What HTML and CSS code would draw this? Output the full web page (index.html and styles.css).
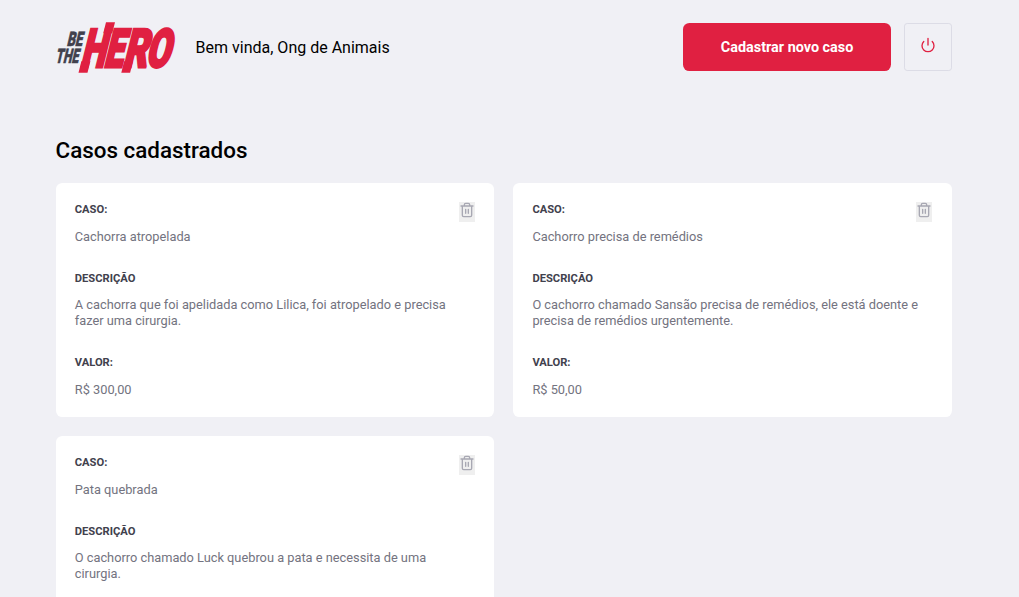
FILE: index.html
```html
<!DOCTYPE html>
<html lang="pt-BR">
<head>
<meta charset="utf-8">
<title>Be The Hero</title>
<link rel="stylesheet" href="styles.css">
</head>
<body>
<svg class="sprite" aria-hidden="true">
  <symbol id="trash" viewBox="0 0 24 24">
    <path d="M3 6h18M19 6v14a2 2 0 0 1-2 2H7a2 2 0 0 1-2-2V6m3 0V4a2 2 0 0 1 2-2h4a2 2 0 0 1 2 2v2M10 11v6M14 11v6"/>
  </symbol>
</svg>
<div class="profile">
  <header class="header">
    <svg class="logo" viewBox="0 0 121 51" role="img" aria-label="Be The Hero">
      <g class="logo-small">
        <text transform="translate(10.500 23.500) skewX(-13)" textLength="15.500" lengthAdjust="spacingAndGlyphs">BE</text>
        <text transform="translate(-1 41) skewX(-13)" textLength="23" lengthAdjust="spacingAndGlyphs">THE</text>
      </g>
      <g class="logo-big" transform="translate(0 44.700) skewX(-14)">
        <text x="23.700" textLength="24.500" lengthAdjust="spacingAndGlyphs">H</text>
        <text x="47.200" textLength="19" lengthAdjust="spacingAndGlyphs">E</text>
        <text x="66.500" textLength="24" lengthAdjust="spacingAndGlyphs">R</text>
        <text x="89" textLength="24" lengthAdjust="spacingAndGlyphs">O</text>
        <rect x="25.500" y="-4" width="6" height="8.500"/>
        <rect x="40.400" y="-43" width="6" height="8"/>
        <rect x="68.300" y="-4" width="5.800" height="8.500"/>
      </g>
    </svg>
    <span class="welcome">Bem vinda, Ong de Animais</span>
    <a class="button" href="#">Cadastrar novo caso</a>
    <button class="power" type="button" aria-label="Sair">
      <svg viewBox="0 0 24 24"><path d="M18.360 6.640a9 9 0 1 1-12.730 0M12 2v10"/></svg>
    </button>
  </header>
  <h1 class="title">Casos cadastrados</h1>
  <ul class="cases">
    <li class="case">
      <strong>CASO:</strong><p>Cachorra atropelada</p>
      <strong>DESCRIÇÃO</strong><p>A cachorra que foi apelidada como Lilica, foi atropelado e precisa fazer uma cirurgia.</p>
      <strong>VALOR:</strong><p>R$ 300,00</p>
      <button class="delete" type="button" aria-label="Excluir"><svg><use href="#trash"/></svg></button>
    </li>
    <li class="case">
      <strong>CASO:</strong><p>Cachorro precisa de remédios</p>
      <strong>DESCRIÇÃO</strong><p>O cachorro chamado Sansão precisa de remédios, ele está doente e precisa de remédios urgentemente.</p>
      <strong>VALOR:</strong><p>R$ 50,00</p>
      <button class="delete" type="button" aria-label="Excluir"><svg><use href="#trash"/></svg></button>
    </li>
    <li class="case">
      <strong>CASO:</strong><p>Pata quebrada</p>
      <strong>DESCRIÇÃO</strong><p>O cachorro chamado Luck quebrou a pata e necessita de uma cirurgia.</p>
      <button class="delete" type="button" aria-label="Excluir"><svg><use href="#trash"/></svg></button>
    </li>
  </ul>
</div>
</body>
</html>
```

FILE: styles.css
```css
* { margin: 0; padding: 0; box-sizing: border-box; }
html { height: 100%; overflow: hidden; }
body { height: 100%; overflow: hidden; background: #f0f0f5; font-family: Roboto, sans-serif; }
.sprite { position: absolute; width: 0; height: 0; }
.profile { width: 896px; margin: 22px 0 0 55.6px; }
.header { display: flex; align-items: center; height: 50px; }
.logo { width: 121px; height: 51px; overflow: visible; flex: none; }
.logo-small { fill: #41414d; font-weight: 900; font-size: 20px; stroke: #41414d; stroke-width: .6px; }
.logo-big { fill: #e02041; stroke: #e02041; stroke-width: 3px; font-weight: 900; font-size: 53px; }
.welcome { margin-left: 19px; padding-top: 1px; font-size: 16px; line-height: 19px; color: #000; }
.button { width: 208px; height: 48px; margin-left: auto; padding: 1px 0 0 1px; border-radius: 6.4px; background: #e02041; color: #fff; font-size: 14.4px; font-weight: 700; line-height: 48px; text-align: center; text-decoration: none; }
.power { display: flex; align-items: center; justify-content: center; width: 48px; height: 48px; margin-left: 13px; border: 1px solid #dcdce6; border-radius: 3.2px; background: transparent; }
.power svg { width: 16px; height: 16px; margin-top: -4px; }
svg path { fill: none; stroke: #e02041; stroke-width: 2; stroke-linecap: round; stroke-linejoin: round; }
.title { margin: 65px 0 18.8px; font-size: 22.4px; font-weight: 500; line-height: 27px; color: #000; }
.cases { display: grid; grid-template-columns: repeat(2, 1fr); gap: 19.2px; list-style: none; }
.case { position: relative; min-height: 234px; padding: 19.2px; background: #fff; border-radius: 6.4px; }
.case strong { display: block; margin-bottom: 10.4px; color: #41414d; font-size: 11.2px; font-weight: 700; line-height: 16px; }
.case p { color: #737380; font-size: 12.8px; line-height: 16px; }
.case strong:first-child { margin-bottom: 10.8px; }
.case p + strong { margin-top: 26px; }
.delete { position: absolute; top: 19px; right: 19.4px; width: 16px; height: 20px; border: 0; background: #efefef; }
.delete svg { display: block; width: 16px; height: 16px; margin-top: -3px; }
#trash path { stroke: #a8a8b3; }
```
